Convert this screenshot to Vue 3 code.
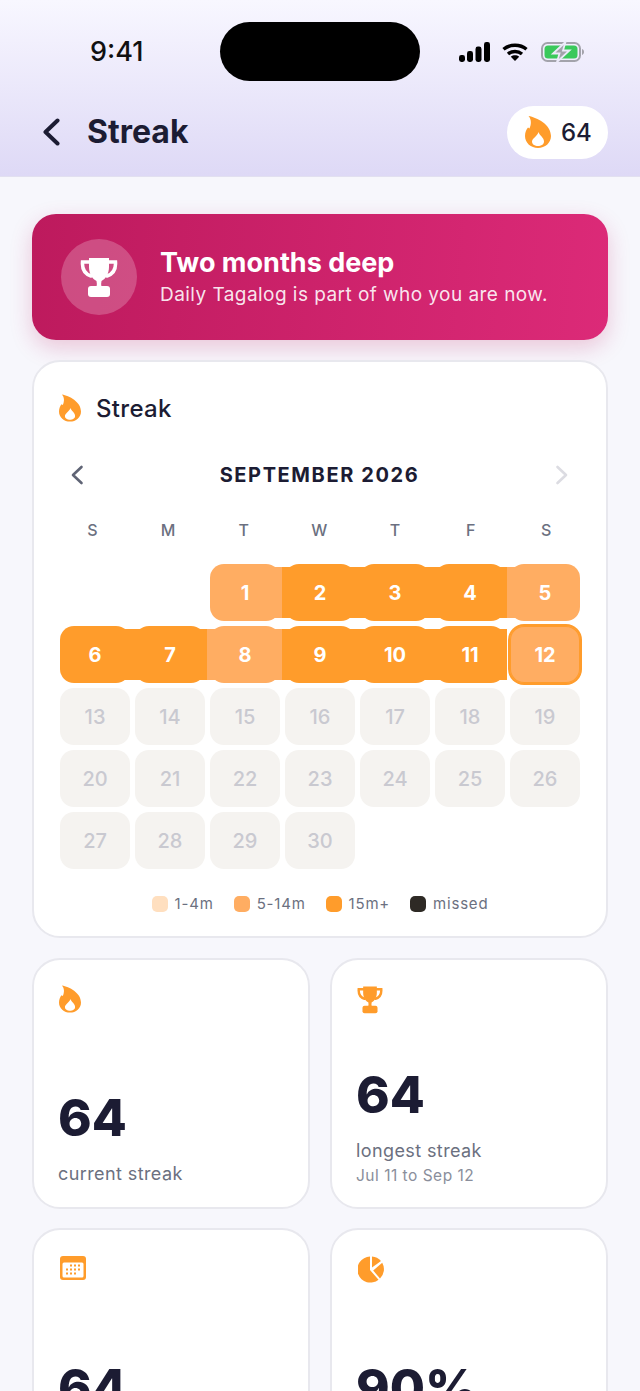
<script setup>
const weekdays = ['S', 'M', 'T', 'W', 'T', 'F', 'S']

// level per active day, the rest of the month is still empty
const levels = { 1: 'mid', 2: 'high', 3: 'high', 4: 'high', 5: 'mid', 6: 'high', 7: 'high', 8: 'mid', 9: 'high', 10: 'high', 11: 'high', 12: 'mid' }

const cells = [null, null]
for (let d = 1; d <= 30; d++) {
  const col = (d + 1) % 7
  const active = d <= 12
  cells.push({
    day: d,
    level: levels[d] || 'empty',
    today: d === 12,
    linkL: active && col > 0 && d > 1 && d !== 12,
    linkR: active && col < 6 && d < 12
  })
}

const legend = [
  { label: '1-4m', color: '#ffdfbf' },
  { label: '5-14m', color: '#ffad62' },
  { label: '15m+', color: '#ff9c2b' },
  { label: 'missed', color: '#2e2a25' }
]

const flameOuter = 'M3.5 0C12 1.5 26 8.5 26 20 26 27 20 32 13 32 6 32 0 27 0 20 0 16 1.500 13.500 3 11.500L4.500 12.500C6.500 8 6.500 3.500 3.500 0Z'
const flameInner = 'M13.500 16C14.500 19.500 19 21.500 19 25.500 19 28.500 16 30 13 30 10 30 7 28.500 7 25.500 7 22.500 12.500 20 13.500 16Z'
const cup = 'M9 1h20v9c0 7-3.500 12-7.500 14-.5 2-.5 4 0 6h-5c.5-2 .5-4 0-6C12.500 22 9 17 9 10Z'
const handles = 'M9 5H2.500C2 12 5 17 11 19M29 5h6.500C36 12 33 17 27 19'
</script>

<template>
  <div class="page">
    <header class="top">
      <div class="status">
        <span class="time">9:41</span>
        <div class="island"></div>
        <div class="status-icons">
          <svg width="31" height="20" viewBox="0 0 31 20">
            <rect x="0" y="13" width="6" height="7" rx="2.4" />
            <rect x="8" y="9" width="6" height="11" rx="2.4" />
            <rect x="16.500" y="4.500" width="6" height="15.500" rx="2.4" />
            <rect x="25" y="0" width="6" height="20" rx="2.4" />
          </svg>
          <svg width="26" height="18" viewBox="0 0 26 18">
            <path d="M1.500 6.300C7.800.9 18.200.9 24.500 6.300" class="wifi" />
            <path d="M6 11C10 7.600 16 7.600 20 11" class="wifi" />
            <path d="M13 18 8.800 13.700C11.200 11.900 14.800 11.900 17.200 13.700Z" />
          </svg>
          <svg width="43" height="22" viewBox="0 0 43 22">
            <rect x="1" y="2" width="38" height="18" rx="5.500" fill="none" stroke="#a3a3ab" stroke-width="2" />
            <rect x="3.500" y="4.500" width="33" height="13" rx="3.500" fill="#3ac95b" />
            <path d="M41 8c1.300.4 2 1.600 2 3s-.7 2.600-2 3Z" fill="#a3a3ab" />
            <path d="M24.500 1 12 12.500h6.500L16 21 28.500 9.500H22Z" fill="#a3a3ab" stroke="#eceaf9" stroke-width="1.800" />
          </svg>
        </div>
      </div>
      <div class="bar">
        <svg class="back" width="18" height="28" viewBox="0 0 18 28">
          <path d="M15.500 2.500 3.500 14l12 11.500" />
        </svg>
        <h1>Streak</h1>
        <div class="chip">
          <svg width="26" height="32" viewBox="0 0 26 32">
            <path :d="flameOuter" fill="#ff9c2b" />
            <path :d="flameInner" fill="#fff" />
          </svg>
          <span>64</span>
        </div>
      </div>
    </header>

    <main class="content">
      <section class="banner">
        <div class="badge">
          <svg width="38" height="40" viewBox="0 0 38 40">
            <path class="handle" :d="handles" />
            <path :d="cup" fill="#fff" />
            <rect x="8" y="29" width="22" height="11" rx="3" fill="#fff" />
          </svg>
        </div>
        <div>
          <h2>Two months deep</h2>
          <p>Daily Tagalog is part of who you are now.</p>
        </div>
      </section>

      <section class="card calendar">
        <div class="cal-head">
          <svg width="22" height="28" viewBox="0 0 26 32">
            <path :d="flameOuter" fill="#ff9c2b" />
            <path :d="flameInner" fill="#fff" />
          </svg>
          <span>Streak</span>
        </div>

        <div class="month">
          <svg class="chev" width="14" height="20" viewBox="0 0 14 20">
            <path d="M11.500 2 3 10l8.500 8" />
          </svg>
          <strong>SEPTEMBER 2026</strong>
          <svg class="chev off" width="14" height="20" viewBox="0 0 14 20">
            <path d="M2.500 2 11 10l-8.500 8" />
          </svg>
        </div>

        <div class="weekdays">
          <span v-for="(w, i) in weekdays" :key="i">{{ w }}</span>
        </div>

        <div class="days">
          <template v-for="(c, i) in cells" :key="i">
            <div v-if="!c"></div>
            <div
              v-else
              class="day"
              :class="[c.level, { today: c.today, 'link-l': c.linkL, 'link-r': c.linkR }]"
            >{{ c.day }}</div>
          </template>
        </div>

        <div class="legend">
          <div v-for="l in legend" :key="l.label" class="legend-item">
            <i :style="{ background: l.color }"></i>
            <span>{{ l.label }}</span>
          </div>
        </div>
      </section>

      <div class="stats">
        <section class="card stat">
          <svg class="ico" width="22" height="28" viewBox="0 0 26 32">
            <path :d="flameOuter" fill="#ff9c2b" />
            <path :d="flameInner" fill="#fff" />
          </svg>
          <div class="stat-text">
            <div class="num">64</div>
            <div class="label">current streak</div>
          </div>
        </section>
        <section class="card stat">
          <svg class="ico" width="26" height="29" viewBox="0 0 38 40">
            <path class="handle orange" :d="handles" />
            <path :d="cup" fill="#ff9c2b" />
            <rect x="8" y="29" width="22" height="11" rx="3" fill="#ff9c2b" />
          </svg>
          <div class="stat-text">
            <div class="num">64</div>
            <div class="label">longest streak</div>
            <div class="sub">Jul 11 to Sep 12</div>
          </div>
        </section>
        <section class="card stat">
          <svg class="ico wide" width="26" height="24" viewBox="0 0 26 24">
            <rect width="26" height="24" rx="3" fill="#ff9c2b" />
            <rect x="2.500" y="6.500" width="21" height="15" rx="1.500" fill="#fff" />
            <g fill="#ff9c2b">
              <rect x="10" y="8.500" width="2" height="2" /><rect x="14" y="8.500" width="2" height="2" /><rect x="18" y="8.500" width="2" height="2" />
              <rect x="6" y="12.500" width="2" height="2" /><rect x="10" y="12.500" width="2" height="2" /><rect x="14" y="12.500" width="2" height="2" /><rect x="18" y="12.500" width="2" height="2" />
              <rect x="6" y="16.500" width="2" height="2" /><rect x="10" y="16.500" width="2" height="2" /><rect x="14" y="16.500" width="2" height="2" />
            </g>
          </svg>
          <div class="stat-text">
            <div class="num">64</div>
            <div class="label"></div>
          </div>
        </section>
        <section class="card stat">
          <svg class="ico wide" width="27" height="27" viewBox="0 0 27 27">
            <path d="M12 .6V14l8.500 9.700A13 13 0 1 1 12 .6Z" fill="#ff9c2b" />
            <path d="M14 .5A13 13 0 0 1 23 5L14 11.600Z" fill="#ff9c2b" />
            <path d="M24.200 6.700A13 13 0 0 1 22 22.500L15.200 14.500Z" fill="#ff9c2b" />
          </svg>
          <div class="stat-text">
            <div class="num">90%</div>
            <div class="label"></div>
          </div>
        </section>
      </div>
    </main>
  </div>
</template>

<style>
html, body {
  margin: 0;
  height: 1391px;
  overflow: hidden;
  background: #f7f7fc;
}
</style>

<style scoped>
.page {
  width: 640px;
  height: 1391px;
  overflow: hidden;
  font-family: Inter, "Liberation Sans", sans-serif;
  color: #1c1c33;
  background: #f7f7fc;
}

.top {
  height: 177px;
  box-sizing: border-box;
  border-bottom: 1px solid #e2e0f0;
  background: linear-gradient(180deg, #f8f7ff 0%, #ded9f6 100%);
}

.status {
  height: 105px;
  position: relative;
  display: flex;
  justify-content: space-between;
  padding: 0 56px 0 90px;
}
.time {
  margin-top: 37px;
  font-size: 27px;
  line-height: 30px;
  font-weight: 500;
  color: #111;
}
.island {
  position: absolute;
  left: 220px;
  top: 22px;
  width: 200px;
  height: 59px;
  border-radius: 30px;
  background: #000;
}
.status-icons {
  margin-top: 42px;
  height: 20px;
  display: flex;
  align-items: center;
  gap: 12px;
}
.status-icons svg:nth-child(2) { margin-right: 1px; }
.wifi {
  fill: none;
  stroke: #000;
  stroke-width: 3.4px;
}

.bar {
  display: flex;
  align-items: center;
  height: 54px;
  padding: 0 32px 0 42px;
}
.back path {
  fill: none;
  stroke: #1c1c33;
  stroke-width: 4px;
  stroke-linecap: round;
  stroke-linejoin: round;
}
.bar h1 {
  margin: 0 0 0 27px;
  font-size: 32px;
  font-weight: 700;
  line-height: 54px;
  flex: 1;
}
.chip {
  width: 101px;
  height: 53px;
  box-sizing: border-box;
  padding-left: 18px;
  border-radius: 27px;
  background: #fff;
  display: flex;
  align-items: center;
  gap: 10px;
  font-size: 24px;
  font-weight: 500;
}

.content {
  padding: 37px 32px 0;
  display: flex;
  flex-direction: column;
  gap: 20px;
}

.banner {
  height: 126px;
  box-sizing: border-box;
  padding: 0 29px;
  border-radius: 24px;
  display: flex;
  align-items: center;
  gap: 23px;
  color: #fff;
  background: linear-gradient(95deg, #bd1a5d 0%, #dc2a78 100%);
  box-shadow: 0 8px 22px rgba(192, 26, 94, 0.22);
}
.badge {
  width: 76px;
  height: 76px;
  flex: none;
  border-radius: 50%;
  background: rgba(255, 255, 255, 0.22);
  display: flex;
  align-items: center;
  justify-content: center;
}
.handle {
  fill: none;
  stroke: #fff;
  stroke-width: 3.5px;
  stroke-linecap: round;
}
.handle.orange { stroke: #ff9c2b; }
.banner h2 {
  margin: 0;
  font-size: 27px;
  line-height: 32px;
  font-weight: 700;
}
.banner p {
  margin: 4px 0 0;
  font-size: 19px;
  line-height: 24px;
  letter-spacing: 0.45px;
  color: rgba(255, 255, 255, 0.9);
}

.card {
  box-sizing: border-box;
  background: #fff;
  border: 2px solid #e8e8ee;
  border-radius: 28px;
}

.calendar {
  height: 578px;
  padding: 32px 26px 0;
}
.cal-head {
  display: flex;
  align-items: center;
  gap: 15px;
  height: 28px;
  margin-left: -1px;
  font-size: 24px;
  font-weight: 500;
  letter-spacing: 0.3px;
}

.month {
  margin-top: 33px;
  height: 40px;
  padding: 0 11px 0 10px;
  display: flex;
  align-items: center;
  justify-content: space-between;
}
.month strong {
  font-size: 20px;
  font-weight: 700;
  letter-spacing: 1.6px;
}
.chev path {
  fill: none;
  stroke: #5f6475;
  stroke-width: 2.6px;
  stroke-linecap: round;
  stroke-linejoin: round;
}
.chev.off path { stroke: #dcdce2; }

.weekdays {
  margin: 25px 0 0 -3px;
  display: grid;
  grid-template-columns: repeat(7, 70.67px);
  column-gap: 5px;
  font-size: 16px;
  line-height: 20px;
  font-weight: 500;
  color: #6b7080;
  text-align: center;
}

.days {
  margin-top: 24px;
  display: grid;
  grid-template-columns: repeat(7, 70px);
  grid-auto-rows: 57px;
  gap: 5px;
}
.day {
  position: relative;
  border-radius: 14px;
  display: flex;
  align-items: center;
  justify-content: center;
  font-size: 20px;
  font-weight: 700;
  color: #fff;
}
.day.empty {
  background: #f5f3f0;
  color: #c9c9d0;
  font-weight: 500;
}
.day.mid { background: #ffad62; }
.day.high { background: #ff9c2b; }
.day.today { box-shadow: 0 0 0 2px #ff9c2b, inset 0 0 0 1px #ff9c2b; }
/* the band that joins two neighbouring days */
.day.link-l::before,
.day.link-r::after {
  content: "";
  position: absolute;
  top: 3px;
  bottom: 3px;
  width: 14px;
  background: inherit;
}
.day.link-l::before { left: -3px; }
.day.link-r::after { right: -2px; }

.legend {
  margin-top: 25px;
  display: flex;
  justify-content: center;
  gap: 20px;
  font-size: 15px;
  line-height: 20px;
  color: #6b7080;
  letter-spacing: 0.8px;
}
.legend-item {
  display: flex;
  align-items: center;
  gap: 7px;
}
.legend-item i {
  width: 16px;
  height: 16px;
  border-radius: 5px;
}

.stats {
  display: grid;
  grid-template-columns: repeat(2, 278px);
  grid-auto-rows: 251px;
  column-gap: 20px;
  row-gap: 19px;
}
.stat {
  padding: 25px 24px 23px;
  display: flex;
  flex-direction: column;
  align-items: flex-start;
}
.ico { margin-left: 1px; }
.ico.wide { margin: 1px 0 0 2px; }
.stat-text { margin-top: auto; }
.num {
  font-size: 51px;
  line-height: 56px;
  font-weight: 800;
}
.label {
  margin-top: 18px;
  min-height: 20px;
  font-size: 18px;
  line-height: 20px;
  letter-spacing: 0.4px;
  color: #6b7080;
}
.sub {
  margin: 5px 0 -2px;
  font-size: 15.5px;
  line-height: 20px;
  letter-spacing: 0.5px;
  color: #8a8e9b;
}
</style>
